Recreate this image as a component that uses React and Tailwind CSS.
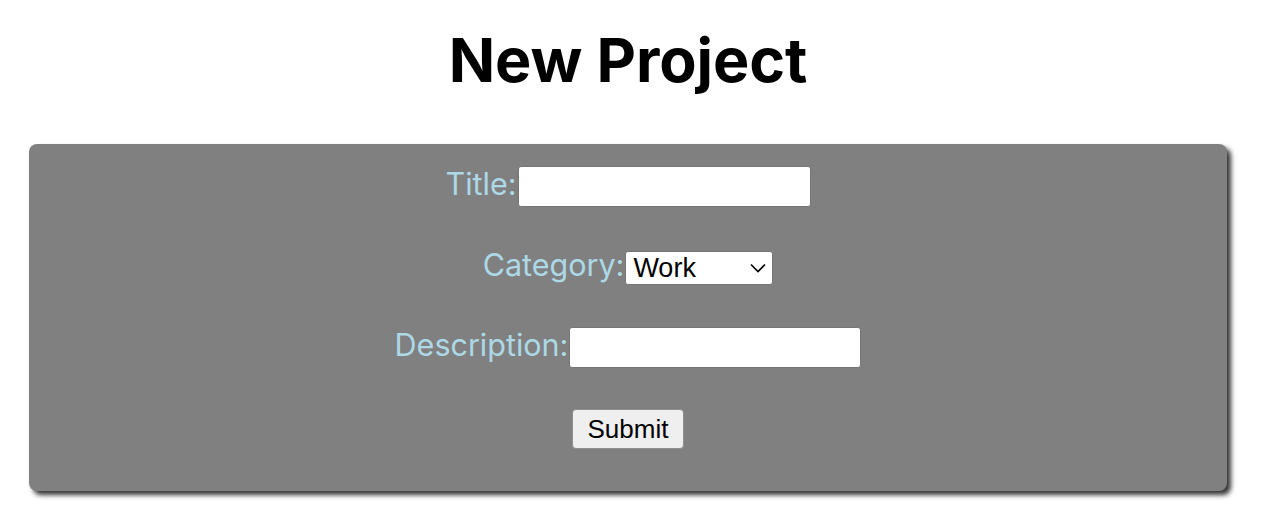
import React from "react";

export default function App() {
  return (
    <div className="min-h-[532px] bg-white font-['Inter',sans-serif]">
      <h1 className="pt-[30px] pr-[8px] text-center text-[61px] font-bold leading-[60px] tracking-[-0.1px] text-black">
        New Project
      </h1>
      <form
        className="ml-[29px] mt-[54px] flex w-[1198px] flex-col items-center rounded-lg bg-[#808080] pt-[22px] pb-[42px] shadow-[4px_4px_5px_rgba(0,0,0,0.8)]"
        onSubmit={(e) => e.preventDefault()}
      >
        <div className="flex h-[41px] items-center justify-center">
          <label className="mb-[6px] text-[30.5px] leading-[30px] text-[#add8e6]">Title:</label>
          <input
            type="text"
            className="ml-[1px] h-[41px] w-[293px] rounded-[3px] border border-[#767676] bg-white px-2 text-[24px] outline-none"
          />
        </div>
        <div className="mt-[44px] flex h-[34px] items-center justify-center">
          <label className="mb-[6px] text-[30.5px] leading-[30px] text-[#add8e6]">Category:</label>
          <div className="relative ml-[1px] h-[34px] w-[148px]">
            <select className="h-[34px] w-[148px] appearance-none rounded-[3px] border border-[#767676] bg-white pl-[7px] font-['Liberation_Sans',Arial,sans-serif] text-[27px] leading-[30px] text-black outline-none">
              <option>Work</option>
              <option>Personal</option>
            </select>
            <svg
              className="pointer-events-none absolute right-[7px] top-[12px]"
              width="16"
              height="10"
              viewBox="0 0 16 10"
              fill="none"
            >
              <path d="M1 1.5 L8 8.5 L15 1.5" stroke="#000" strokeWidth="1.6" />
            </svg>
          </div>
        </div>
        <div className="mt-[42px] flex h-[41px] items-center justify-center">
          <label className="mb-[5px] text-[30.5px] leading-[30px] text-[#add8e6]">Description:</label>
          <input
            type="text"
            className="ml-[1px] h-[41px] w-[292px] rounded-[3px] border border-[#767676] bg-white px-2 text-[24px] outline-none"
          />
        </div>
        <div className="mt-[41px] flex h-[40px] items-center justify-center">
          <button
            type="submit"
            className="h-[40px] w-[112px] rounded-[4px] border border-[#8f8f8f] bg-[#efefef] font-['Liberation_Sans',Arial,sans-serif] text-[26px] leading-[30px] text-black"
          >
            Submit
          </button>
        </div>
      </form>
    </div>
  );
}
